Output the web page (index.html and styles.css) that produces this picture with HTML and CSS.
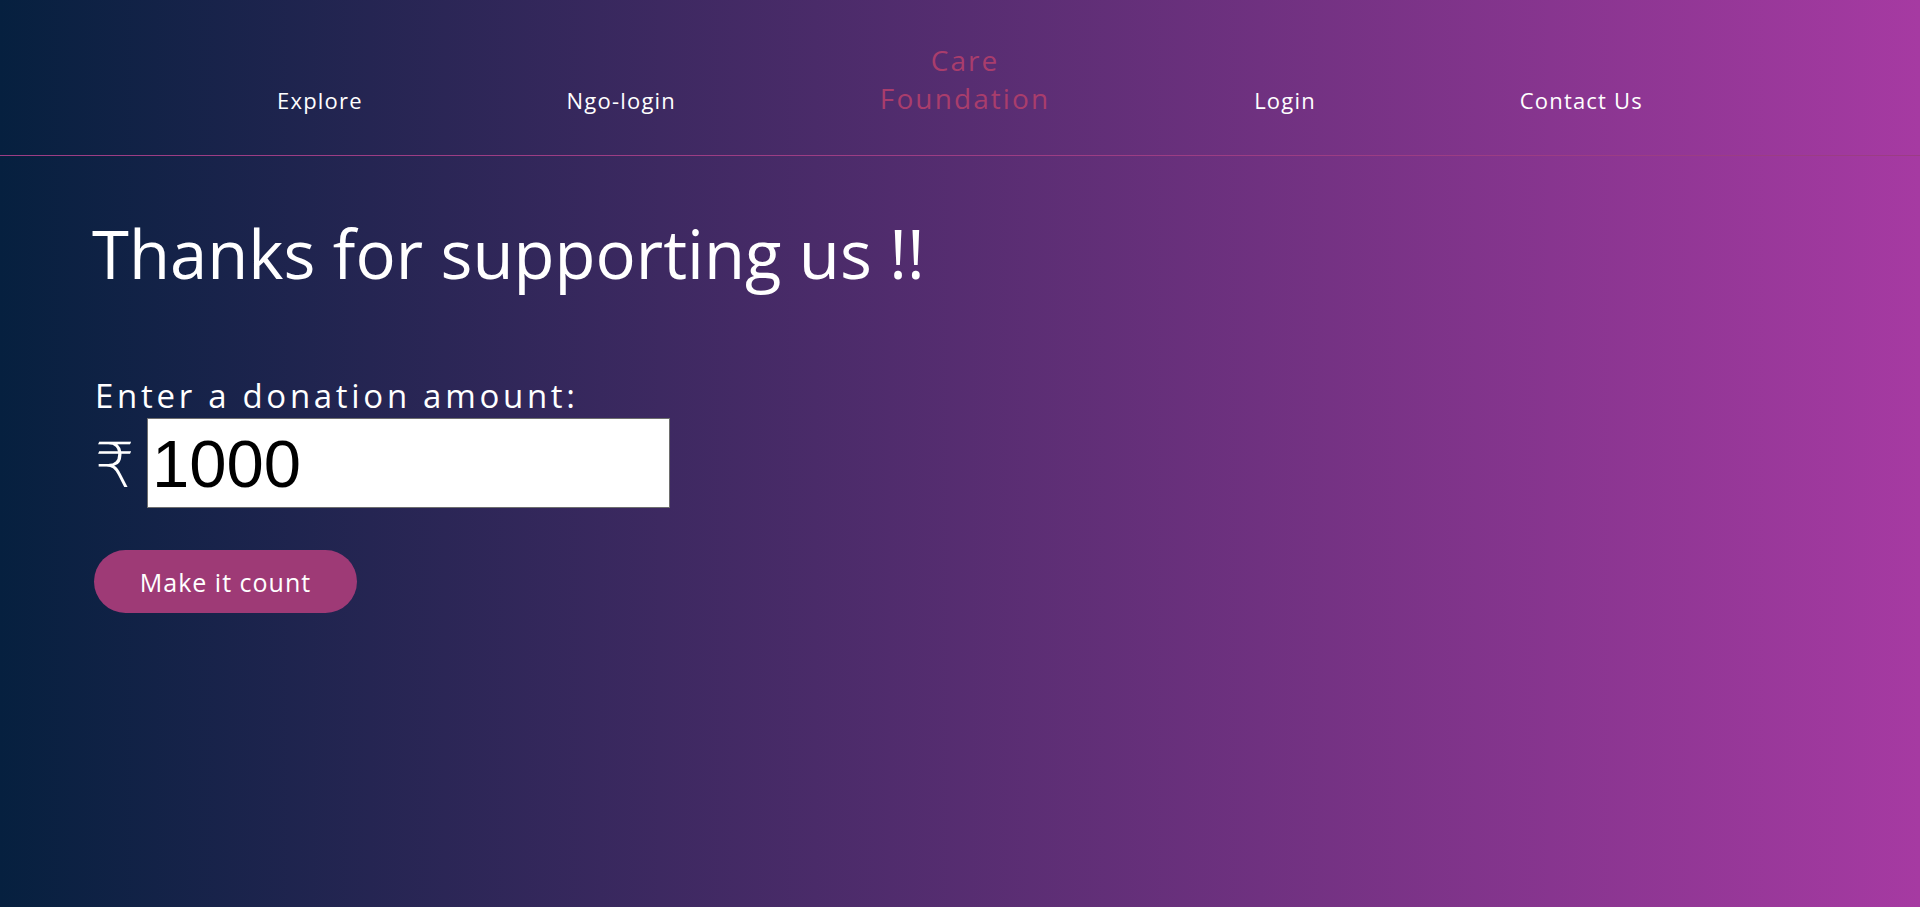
FILE: index.html
```html
<!DOCTYPE html>
<html lang="en">
<head>
<meta charset="utf-8">
<title>Care Foundation - Donate</title>
<link rel="stylesheet" href="styles.css">
</head>
<body>
<nav class="nav">
  <a class="nav-link" href="#">Explore</a>
  <a class="nav-link" href="#">Ngo-login</a>
  <a class="brand" href="#"><span class="brand-line">Care</span><span class="brand-line">Foundation</span></a>
  <a class="nav-link" href="#">Login</a>
  <a class="nav-link" href="#">Contact Us</a>
</nav>
<main class="content">
  <h1 class="title">Thanks for supporting us !!</h1>
  <form class="donate">
    <label class="label" for="amount">Enter a donation amount:</label>
    <div class="amount-row">
      <span class="rupee">₹</span>
      <input class="amount" id="amount" type="text" value="1000">
    </div>
    <button class="cta" type="button">Make it count</button>
  </form>
</main>
</body>
</html>
```
FILE: styles.css
```css
* { box-sizing: border-box; }
html, body { margin: 0; padding: 0; }
body {
  min-height: 100vh;
  background: linear-gradient(to right, #06203f 0%, #a63aa2 100%);
  font-family: "Open Sans", "DejaVu Sans", sans-serif;
  color: #fff;
}
.nav {
  padding: 41px 277px 37px;
  display: flex;
  justify-content: space-between;
  align-items: last baseline;
  border-bottom: 1px solid #9c3d84;
}
.nav-link {
  color: #fff;
  text-decoration: none;
  font-size: 22px;
  line-height: 36px;
  letter-spacing: 1.2px;
}
.brand {
  color: #a93d6c;
  text-decoration: none;
  font-size: 28px;
  line-height: 38px;
  letter-spacing: 2.1px;
  text-align: center;
}
.brand-line {
  display: block;
}
.content {
  padding: 57px 0 0 92px;
}
.title {
  margin: 0;
  font-size: 67px;
  line-height: 80px;
  font-weight: 400;
}
.donate {
  margin-top: 83px;
  display: flex;
  flex-direction: column;
  align-items: flex-start;
}
.label {
  font-size: 33px;
  line-height: 40px;
  letter-spacing: 3.7px;
  padding-left: 3px;
}
.amount-row {
  margin-top: 2px;
  display: flex;
  align-items: center;
  padding-left: 3px;
}
.rupee {
  width: 52px;
  font-size: 62px;
  line-height: 60px;
  font-weight: 300;
}
.amount {
  width: 523px;
  height: 90px;
  border: 1px solid #6e6e6e;
  padding: 0 4px;
  font-family: "Liberation Sans", Arial, sans-serif;
  font-size: 67px;
  color: #000;
  background: #fff;
}
.cta {
  margin-top: 42px;
  margin-left: 2px;
  width: 263px;
  height: 63px;
  border: none;
  border-radius: 32px;
  background: #9e3a76;
  color: #fff;
  font-family: "Open Sans", "DejaVu Sans", sans-serif;
  font-size: 25px;
  letter-spacing: 1px;
  cursor: pointer;
}
```
